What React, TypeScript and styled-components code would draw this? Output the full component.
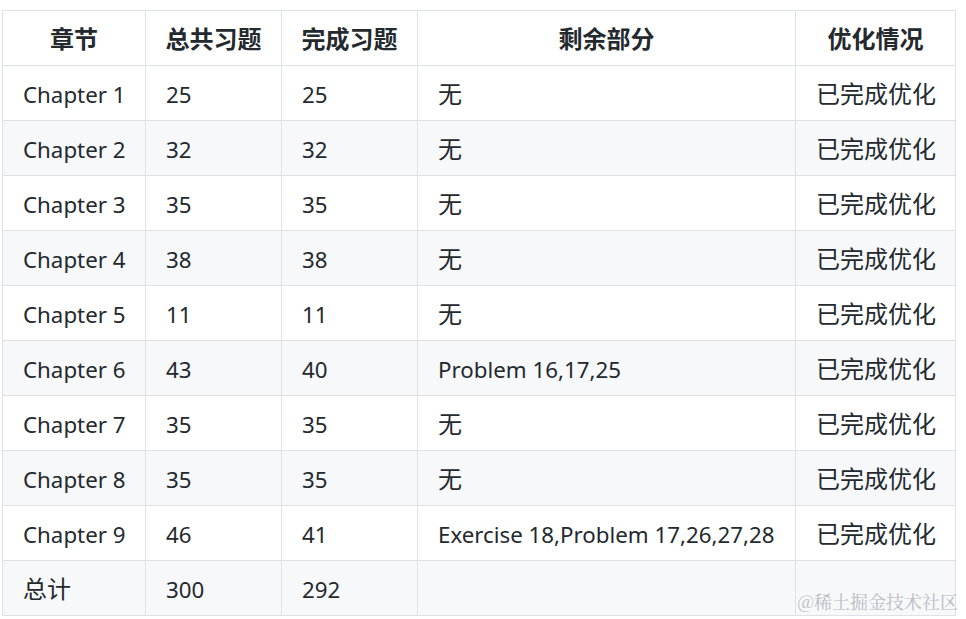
import styled, { createGlobalStyle } from 'styled-components'

const GlobalStyle = createGlobalStyle`
    html, body {
        margin: 0;
        background: #ffffff;
    }
`

const Page = styled.div`
    position: relative;
    width: 966px;
    height: 619px;
    padding: 10px 0 0 2px;
    box-sizing: border-box;
    overflow: hidden;
    font-family: 'Noto Sans', 'Noto Sans CJK SC', sans-serif;
    color: #24292e;
    line-height: 1.3;
`

const Tabela = styled.table`
    border-collapse: collapse;
    table-layout: fixed;
    width: 953px;
`

const Cabecalho = styled.th`
    height: 52px;
    padding: 2px 8px 0;
    border: 1px solid #dfe2e5;
    font-size: 24px;
    font-weight: 700;
    text-align: center;
    white-space: nowrap;
    background: #ffffff;
`

const Linha = styled.tr<{ $zebra: boolean }>`
    background: ${(p) => (p.$zebra ? '#f6f8fa' : '#ffffff')};
`

const Celula = styled.td<{ $right?: boolean; $cjk?: boolean }>`
    height: 52px;
    padding: 2px 20px 0;
    border: 1px solid #dfe2e5;
    font-size: ${(p) => (p.$cjk ? '24px' : '22.3px')};
    text-align: ${(p) => (p.$right ? 'right' : 'left')};
    white-space: nowrap;
`

const MarcaDagua = styled.div`
    position: absolute;
    right: 8px;
    bottom: 6px;
    font-family: 'Noto Serif CJK SC', 'Noto Sans CJK SC', serif;
    font-size: 18px;
    color: #b8bcc2;
`

const colunas = [
    { titulo: '章节', largura: 143 },
    { titulo: '总共习题', largura: 136 },
    { titulo: '完成习题', largura: 136 },
    { titulo: '剩余部分', largura: 378 },
    { titulo: '优化情况', largura: 160 },
]

const capitulos = [
    ['Chapter 1', '25', '25', '无', '已完成优化'],
    ['Chapter 2', '32', '32', '无', '已完成优化'],
    ['Chapter 3', '35', '35', '无', '已完成优化'],
    ['Chapter 4', '38', '38', '无', '已完成优化'],
    ['Chapter 5', '11', '11', '无', '已完成优化'],
    ['Chapter 6', '43', '40', 'Problem 16,17,25', '已完成优化'],
    ['Chapter 7', '35', '35', '无', '已完成优化'],
    ['Chapter 8', '35', '35', '无', '已完成优化'],
    ['Chapter 9', '46', '41', 'Exercise 18,Problem 17,26,27,28', '已完成优化'],
    ['总计', '300', '292', '', ''],
]

const ehChines = (texto: string) => /[\u4e00-\u9fff]/.test(texto)

function App() {
    return (
        <Page>
            <GlobalStyle />
            <Tabela>
                <colgroup>
                    {colunas.map((c) => (
                        <col key={c.titulo} style={{ width: c.largura }} />
                    ))}
                </colgroup>
                <thead>
                    <tr>
                        {colunas.map((c) => (
                            <Cabecalho key={c.titulo}>{c.titulo}</Cabecalho>
                        ))}
                    </tr>
                </thead>
                <tbody>
                    {capitulos.map((linha, i) => (
                        <Linha key={linha[0]} $zebra={i % 2 === 1}>
                            {linha.map((valor, j) => (
                                <Celula key={j} $right={j === 4} $cjk={ehChines(valor)}>
                                    {valor}
                                </Celula>
                            ))}
                        </Linha>
                    ))}
                </tbody>
            </Tabela>
            <MarcaDagua>@稀土掘金技术社区</MarcaDagua>
        </Page>
    )
}

export default App
